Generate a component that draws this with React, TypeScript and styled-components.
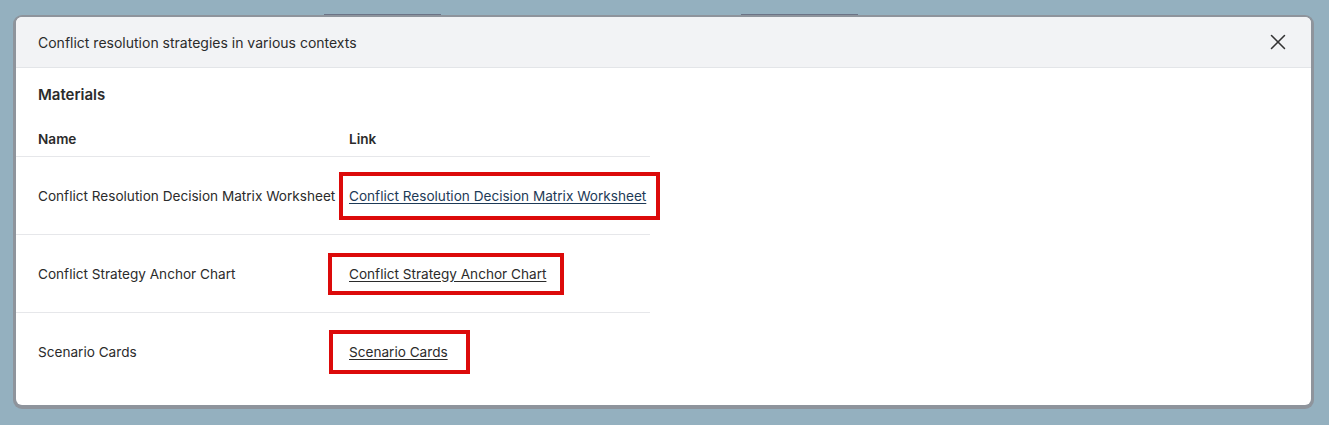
import styled, { createGlobalStyle } from "styled-components"
import { X } from "lucide-react"

const GlobalStyle = createGlobalStyle`
  html, body {
    margin: 0;
    padding: 0;
    background: #94b0bf;
    font-family: Inter, "Noto Sans", "Liberation Sans", sans-serif;
  }
`

const Page = styled.div`
  position: relative;
  width: 1329px;
  height: 425px;
  padding: 17px 18px 0 16px;
  box-sizing: border-box;
`

const BackTabs = styled.div`
  position: absolute;
  top: 14px;
  left: 324px;
  display: flex;
  gap: 300px;
`

const BackTab = styled.div`
  width: 117px;
  height: 3px;
  background: #6b7386;
`

const Modal = styled.div`
  position: relative;
  height: 388px;
  background: #ffffff;
  border-radius: 6px;
  box-shadow: 0 1px 0 3px #8e949c;
  overflow: hidden;
  display: flex;
  flex-direction: column;
`

const Header = styled.div`
  height: 50px;
  flex-shrink: 0;
  display: flex;
  align-items: center;
  justify-content: space-between;
  padding: 0 20px 0 22px;
  background: #f2f3f5;
  border-bottom: 1px solid #e3e5e8;
`

const Title = styled.h2`
  margin: 0;
  font-size: 14px;
  font-weight: 400;
  color: #2b2b2b;
`

const CloseButton = styled.button`
  display: flex;
  align-items: center;
  justify-content: center;
  padding: 0;
  border: none;
  background: none;
  color: #333;
  cursor: pointer;
`

const Body = styled.div`
  padding-top: 17px;
`

const Heading = styled.h3`
  margin: 0 0 17px 22px;
  font-size: 15px;
  line-height: 20px;
  font-weight: 600;
  color: #2b2b2b;
`

const Table = styled.table`
  width: 634px;
  border-collapse: collapse;
  font-size: 13.6px;
  color: #2b2b2b;
`

const HeadCell = styled.th<{ $first?: boolean }>`
  text-align: left;
  font-weight: 600;
  height: 34px;
  padding: 0 0 0 ${(p) => (p.$first ? "22px" : "11px")};
  width: ${(p) => (p.$first ? "300px" : "auto")};
  border-bottom: 1px solid #e6e7ea;
`

const Row = styled.tr<{ $last?: boolean }>`
  height: 78px;
  border-bottom: ${(p) => (p.$last ? "none" : "1px solid #e6e7ea")};
`

const Cell = styled.td<{ $first?: boolean }>`
  padding: 0 0 0 ${(p) => (p.$first ? "22px" : "11px")};
  vertical-align: middle;
  white-space: nowrap;
`

const LinkWrap = styled.span`
  position: relative;
  display: inline-block;
`

const Link = styled.a<{ $visited?: boolean }>`
  color: ${(p) => (p.$visited ? "#1d3a57" : "#2b2b2b")};
  text-decoration: underline;
  text-underline-offset: 2px;
`

const Highlight = styled.span<{ $l: number; $r: number; $v: number }>`
  position: absolute;
  left: -${(p) => p.$l}px;
  right: -${(p) => p.$r}px;
  top: -${(p) => p.$v}px;
  bottom: -${(p) => p.$v}px;
  border: 4px solid #dc0a0a;
  pointer-events: none;
`

const materials = [
  { name: "Conflict Resolution Decision Matrix Worksheet", visited: true, box: { l: 10, r: 14, v: 16 } },
  { name: "Conflict Strategy Anchor Chart", visited: false, box: { l: 21, r: 18, v: 13 } },
  { name: "Scenario Cards", visited: false, box: { l: 20, r: 22, v: 14 } },
]

export default function App() {
  return (
    <>
      <GlobalStyle />
      <Page>
        <BackTabs>
          <BackTab />
          <BackTab />
        </BackTabs>
        <Modal>
          <Header>
            <Title>Conflict resolution strategies in various contexts</Title>
            <CloseButton aria-label="Close">
              <X size={26} strokeWidth={1.4} />
            </CloseButton>
          </Header>
          <Body>
            <Heading>Materials</Heading>
            <Table>
              <thead>
                <tr>
                  <HeadCell $first>Name</HeadCell>
                  <HeadCell>Link</HeadCell>
                </tr>
              </thead>
              <tbody>
                {materials.map((m, i) => (
                  <Row key={m.name} $last={i === materials.length - 1}>
                    <Cell $first>{m.name}</Cell>
                    <Cell>
                      <LinkWrap>
                        <Link href="#" $visited={m.visited}>{m.name}</Link>
                        <Highlight $l={m.box.l} $r={m.box.r} $v={m.box.v} />
                      </LinkWrap>
                    </Cell>
                  </Row>
                ))}
              </tbody>
            </Table>
          </Body>
        </Modal>
      </Page>
    </>
  )
}
